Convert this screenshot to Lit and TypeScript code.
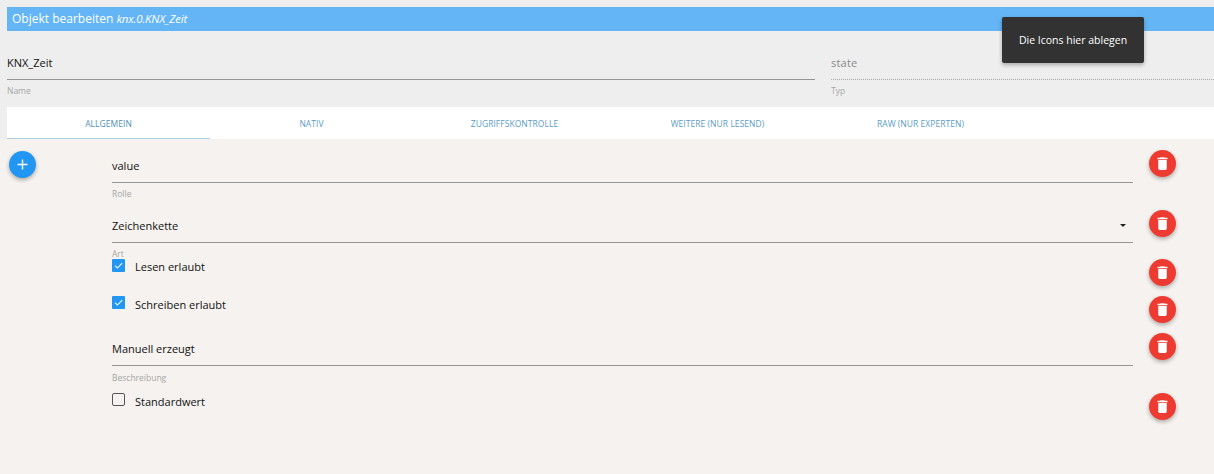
import { LitElement, html, css, svg } from "lit";
import { customElement } from "lit/decorators.js";

const trash = svg`<svg viewBox="0 0 24 24" width="17" height="17"><path fill="#fff" d="M6 19c0 1.1.9 2 2 2h8c1.1 0 2-.9 2-2V7H6v12zM19 4h-3.5l-1-1h-5l-1 1H5v2h14V4z"/></svg>`;

@customElement("app-root")
export class AppRoot extends LitElement {
  static styles = css`
    :host { display: block; width: 1214px; height: 474px; overflow: hidden; position: relative; background: #eee; font-family: "Open Sans", "Noto Sans", sans-serif; color: #111; }
    .head { padding: 7px 0 0 7px; height: 107px; box-sizing: border-box; }
    .title { height: 24px; background: #64b5f6; color: #fff; font-size: 12px; line-height: 24px; padding-left: 5px; }
    .title em { font-style: italic; font-size: 11.5px; letter-spacing: -.2px; }
    .meta { display: flex; gap: 16px; padding-top: 23px; }
    .f-name { width: 808px; }
    .f-type { flex: 1; }
    .val { font-size: 11px; line-height: 18px; height: 25px; border-bottom: 1px solid #949494; }
    .f-type .val { color: #8a8a8a; border-bottom: 1px dotted #aaa; letter-spacing: .2px; }
    .lab { font-size: 8.5px; line-height: 12px; color: #a6a6a6; margin-top: 5px; }
    .tabs { margin-left: 7px; height: 32px; background: #fff; display: flex; }
    .tab { width: 203px; height: 32px; box-sizing: border-box; text-align: center; font-size: 8.5px; line-height: 33px; letter-spacing: .05px; color: #5b9cc4; text-transform: uppercase; }
    .tab.on { border-bottom: 1px solid #a9d1ea; color: #4f8fb5; }
    .body { background: #f5f2ef; height: 335px; display: flex; padding: 12px 0 0 9px; box-sizing: border-box; }
    .add { width: 27px; height: 27px; border-radius: 50%; background: #2196f3; display: flex; align-items: center; justify-content: center; box-shadow: 0 2px 4px rgba(0,0,0,.3); flex: none; }
    .rows { margin-left: 76px; width: 1064px; margin-top: -1px; }
    .row { display: flex; align-items: flex-start; justify-content: space-between; }
    .h37 { height: 37px; } .h49 { height: 49px; } .h60 { height: 60px; }
    .field { width: 1021px; padding-top: 7px; position: relative; }
    .field .val { line-height: 17px; height: 25px; }
    .field .lab { margin-top: 5px; }
    .field .lab.far { margin-top: 6px; }
    .arrow { position: absolute; right: 7px; top: 14px; width: 0; height: 0; border: 3px solid transparent; border-top: 3.5px solid #222; border-bottom: 0; }
    .del { width: 27px; height: 27px; border-radius: 50%; background: #ee3b32; display: flex; align-items: center; justify-content: center; box-shadow: 0 2px 4px rgba(0,0,0,.3); flex: none; }
    .check { display: flex; align-items: flex-start; width: 1021px; font-size: 11px; }
    .box { width: 13px; height: 13px; background: #2196f3; border-radius: 1px; display: flex; align-items: center; justify-content: center; flex: none; margin-right: 10px; }
    .box.off { background: transparent; border: 1px solid #555; border-radius: 2px; box-sizing: border-box; }
    .txt { line-height: 16px; }
    .txt.low { margin-top: 1px; }
    .tip { position: absolute; left: 1002px; top: 17px; width: 142px; height: 46px; background: #323232; color: #fff; border-radius: 2px; font-size: 10.5px; line-height: 47px; text-align: center; box-shadow: 0 2px 4px rgba(0,0,0,.3); }
  `;

  private box(on: boolean) {
    return on
      ? html`<span class="box"><svg width="11" height="11" viewBox="0 0 24 24"><path fill="none" stroke="#fff" stroke-width="2.2" d="M4.5 12.5l5 5L20 7"/></svg></span>`
      : html`<span class="box off"></span>`;
  }

  private del() {
    return html`<div class="del">${trash}</div>`;
  }

  render() {
    return html`
      <div class="head">
        <div class="title">Objekt bearbeiten <em>knx.0.KNX_Zeit</em></div>
        <div class="meta">
          <div class="f-name"><div class="val">KNX_Zeit</div><div class="lab">Name</div></div>
          <div class="f-type"><div class="val">state</div><div class="lab">Typ</div></div>
        </div>
      </div>
      <div class="tabs">
        <div class="tab on">Allgemein</div>
        <div class="tab">Nativ</div>
        <div class="tab">Zugriffskontrolle</div>
        <div class="tab">Weitere (nur lesend)</div>
        <div class="tab">Raw (nur Experten)</div>
      </div>
      <div class="body">
        <div class="add"><svg width="17" height="17" viewBox="0 0 24 24"><path fill="#fff" d="M19 13h-6v6h-2v-6H5v-2h6V5h2v6h6v2z"/></svg></div>
        <div class="rows">
          <div class="row h60">
            <div class="field"><div class="val">value</div><div class="lab">Rolle</div></div>
            ${this.del()}
          </div>
          <div class="row h49">
            <div class="field"><div class="val">Zeichenkette</div><span class="arrow"></span><div class="lab">Art</div></div>
            ${this.del()}
          </div>
          <div class="row h37">
            <div class="check">${this.box(true)}<span class="txt">Lesen erlaubt</span></div>
            ${this.del()}
          </div>
          <div class="row h37">
            <div class="check">${this.box(true)}<span class="txt low">Schreiben erlaubt</span></div>
            ${this.del()}
          </div>
          <div class="row h60">
            <div class="field"><div class="val">Manuell erzeugt</div><div class="lab far">Beschreibung</div></div>
            ${this.del()}
          </div>
          <div class="row h37">
            <div class="check">${this.box(false)}<span class="txt low">Standardwert</span></div>
            ${this.del()}
          </div>
        </div>
      </div>
      <div class="tip">Die Icons hier ablegen</div>
    `;
  }
}
